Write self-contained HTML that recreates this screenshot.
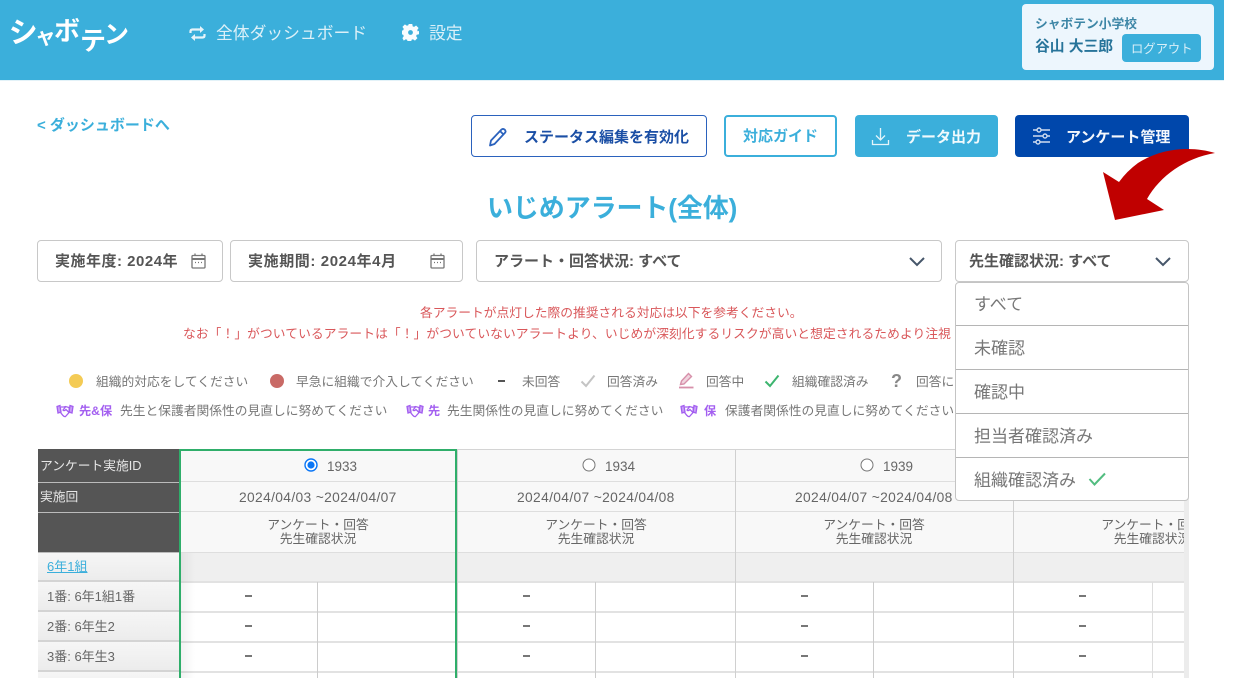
<!DOCTYPE html>
<html lang="ja">
<head>
<meta charset="utf-8">
<title>いじめアラート(全体)</title>
<style>
*{box-sizing:border-box}
html,body{margin:0;padding:0;background:#fff}
body{width:1250px;height:678px;position:relative;overflow:hidden;font-family:"Liberation Sans","Noto Sans CJK JP",sans-serif;color:#666;filter:blur(.35px)}
.a{position:absolute;white-space:nowrap}
.t{position:absolute;white-space:nowrap;line-height:1}
svg{position:absolute;display:block}
.hdr{position:absolute;left:0;top:0;width:1224px;height:81px;background:#3bafdb;border-bottom:1px solid #e3f2f8}
.logo{position:absolute;font-size:29px;font-weight:700;color:#fff;line-height:1}
.nav{position:absolute;font-size:16.8px;line-height:1;color:#dcf0f8;white-space:nowrap}
.btn{position:absolute;top:115px;height:42px;border-radius:4px}
.bt{position:absolute;top:130px;font-size:15px;font-weight:700;line-height:1;white-space:nowrap}
.f{position:absolute;top:240px;height:42px;background:#fff;border:1px solid #c8c8c8;border-radius:4px}
.ft{position:absolute;top:254px;font-size:15px;font-weight:700;color:#555;line-height:1;white-space:nowrap}
.red{font-size:12.75px;color:#d9575a}
.lg{font-size:12.75px;color:#777}
.pp{font-size:12.75px;font-weight:700;color:#a35ff0}
.c{position:absolute;border-bottom:1px solid #dedede;background:#f8f8f8}
.d{position:absolute;background:#555;border-bottom:1px solid #bbb;color:#e6e6e6;font-size:12.75px;line-height:1;white-space:nowrap}
.l{position:absolute;left:0;width:141px;background:linear-gradient(#f6f6f6,#ececec);border-bottom:2px solid #d4d4d4;font-size:13px;color:#666;white-space:nowrap;line-height:1}
.ct{position:absolute;text-align:center;color:#666;font-size:12.75px;line-height:14px;white-space:nowrap}
.dash{position:absolute;width:7px;height:2px;background:#777}
.dd{position:absolute;left:956px;width:232px;font-size:17px;color:#777;padding-left:18px;border-bottom:1px solid #b5b5b5;line-height:1;white-space:nowrap}
.n{position:absolute;font-size:13.5px;color:#666;line-height:1;white-space:nowrap}
.dt{position:absolute;font-size:13.8px;letter-spacing:.35px;color:#666;line-height:1;white-space:nowrap}
</style>
</head>
<body>

<!-- header -->
<div class="hdr"></div>
<span class="logo" style="left:9px;top:19px;transform:rotate(-4deg)">シ</span>
<span class="logo" style="left:35px;top:27px;font-size:21px;transform:rotate(-6deg)">ャ</span>
<span class="logo" style="left:54px;top:18px;font-size:26px">ボ</span>
<span class="logo" style="left:80px;top:28px;font-size:26px">テ</span>
<span class="logo" style="left:104px;top:23px;font-size:25px">ン</span>

<svg style="left:189px;top:25px" width="17" height="17" viewBox="0 0 17 17" fill="none" stroke="#e6f4fa" stroke-width="2.2"><path d="M1.500 8V6.500Q1.500 4.500 3.500 4.500H12"/><path d="M15.500 9V10.500Q15.500 12.500 13.500 12.500H5"/><path d="M11 1L15 4.500L11 8Z" fill="#e6f4fa" stroke="none"/><path d="M6 9L2 12.500L6 16Z" fill="#e6f4fa" stroke="none"/></svg>
<span class="nav" style="left:216px;top:26px">全体ダッシュボード</span>
<svg style="left:402px;top:24px" width="17" height="17" viewBox="0 0 24 24"><path fill="#f8fcfe" fill-rule="evenodd" d="M9.500 0h5l.6 3.300 2 .8 2.800-1.900 3.500 3.500-1.900 2.800.8 2L24 9.500v5l-3.300.6-.8 2 1.900 2.800-3.500 3.500-2.800-1.900-2 .8-.6 3.300h-5l-.6-3.300-2-.8-2.800 1.900L.6 19.900l1.900-2.800-.8-2L-1 14.500v-5l2.700-.6.8-2L.6 4.100 4.100.6l2.800 1.900 2-.8zM12 8.600a3.400 3.400 0 1 0 0 6.800 3.400 3.400 0 0 0 0-6.800z"/></svg>
<span class="nav" style="left:429px;top:26px">設定</span>

<div class="a" style="left:1022px;top:4px;width:192px;height:66px;background:#edf6fd;border-radius:4px"></div>
<span class="t" style="left:1035px;top:18px;font-size:12.75px;font-weight:700;color:#3d86a6">シャボテン小学校</span>
<span class="t" style="left:1035px;top:40px;font-size:14.8px;font-weight:700;color:#27749a">谷山 大三郎</span>
<div class="a" style="left:1122px;top:34px;width:79px;height:28px;background:#3bafdb;border-radius:4px"></div>
<span class="t" style="left:1131px;top:43px;font-size:12.3px;color:#d8eff8">ログアウト</span>

<!-- back link -->
<span class="t" style="left:37px;top:118px;font-size:15px;font-weight:700;color:#3bafdb">&lt; ダッシュボードへ</span>

<!-- action buttons -->
<div class="btn" style="left:471px;width:236px;background:#fff;border:1px solid #2b62bd"></div>
<svg style="left:488px;top:127px" width="20" height="20" viewBox="0 0 20 20" fill="none" stroke="#2b62bd" stroke-width="1.800" stroke-linejoin="round"><path d="M2 18.500L3 13.500L13.500 2.500Q15 1.200 16.800 2.700Q18.200 4.300 17 5.800L6.500 17Z"/><path d="M12 4L15.500 7.500"/></svg>
<span class="bt" style="left:524px;color:#1b4fa5">ステータス編集を有効化</span>

<div class="btn" style="left:724px;width:113px;background:#fff;border:2px solid #3bafdb"></div>
<span class="bt" style="left:743px;top:129px;color:#3bafdb">対応ガイド</span>

<div class="btn" style="left:855px;width:143px;background:#3bafdb"></div>
<svg style="left:871px;top:127px" width="19" height="19" viewBox="0 0 19 19" fill="none" stroke="#e4f4fa" stroke-width="1.300"><path d="M9.500 1V12.500"/><path d="M5 8.500L9.500 13L14 8.500"/><path d="M1.500 13V17.500H17.500V13"/></svg>
<span class="bt" style="left:906px;color:#f1fafd">データ出力</span>

<div class="btn" style="left:1015px;width:174px;background:#0047ab"></div>
<svg style="left:1032px;top:127px" width="19" height="18" viewBox="0 0 19 18" fill="none" stroke="#cfdcf0" stroke-width="1.400"><path d="M1 3H5M9 3H18M1 9H11M15 9H18M1 15H4M8 15H18"/><circle cx="7" cy="3" r="2"/><circle cx="13" cy="9" r="2"/><circle cx="6" cy="15" r="2"/></svg>
<span class="bt" style="left:1066px;color:#f4f7fc">アンケート管理</span>

<!-- title -->
<span class="t" style="left:487px;top:195px;font-size:26px;font-weight:700;color:#3bafdb;letter-spacing:-.1px">いじめアラート(全体)</span>

<!-- filters -->
<div class="f" style="left:37px;width:186px"></div>
<span class="ft" style="left:55px;letter-spacing:.5px">実施年度: 2024年</span>
<svg style="left:191px;top:253px" width="15" height="16" viewBox="0 0 15 16" fill="none" stroke="#777" stroke-width="1.300"><rect x="1" y="2.500" width="13" height="12.500" rx="1"/><path d="M1 6H14" stroke-width="2"/><path d="M4 .5V3M11 .5V3"/><path d="M4 9.500H5M7 9.500H8M10 9.500H11"/></svg>
<div class="f" style="left:230px;width:233px"></div>
<span class="ft" style="left:248px;letter-spacing:.6px">実施期間: 2024年4月</span>
<svg style="left:430px;top:253px" width="15" height="16" viewBox="0 0 15 16" fill="none" stroke="#777" stroke-width="1.300"><rect x="1" y="2.500" width="13" height="12.500" rx="1"/><path d="M1 6H14" stroke-width="2"/><path d="M4 .5V3M11 .5V3"/><path d="M4 9.500H5M7 9.500H8M10 9.500H11"/></svg>
<div class="f" style="left:476px;width:466px"></div>
<span class="ft" style="left:494px">アラート・回答状況: すべて</span>
<svg style="left:908px;top:256px" width="18" height="11" viewBox="0 0 18 11" fill="none" stroke="#46566a" stroke-width="2"><path d="M2 2L9 9L16 2"/></svg>
<div class="f" style="left:955px;width:234px"></div>
<span class="ft" style="left:969px">先生確認状況: すべて</span>
<svg style="left:1154px;top:256px" width="18" height="11" viewBox="0 0 18 11" fill="none" stroke="#46566a" stroke-width="2"><path d="M2 2L9 9L16 2"/></svg>

<!-- notice -->
<span class="t red" style="left:420px;top:307px">各アラートが点灯した際の推奨される対応は以下を参考ください。</span>
<span class="t red" style="left:183px;top:328px;letter-spacing:.08px">なお「！」がついているアラートは「！」がついていないアラートより、いじめが深刻化するリスクが高いと想定されるためより注視</span>

<!-- legend row 1 -->
<div class="a" style="left:69px;top:374px;width:14px;height:14px;border-radius:50%;background:#f4cb55"></div>
<span class="t lg" style="left:96px;top:376px">組織的対応をしてください</span>
<div class="a" style="left:270px;top:374px;width:14px;height:14px;border-radius:50%;background:#c96a66"></div>
<span class="t lg" style="left:296px;top:376px">早急に組織で介入してください</span>
<div class="dash" style="left:498px;top:380px;height:2px;background:#555"></div>
<span class="t lg" style="left:522px;top:376px">未回答</span>
<svg style="left:580px;top:374px" width="16" height="14" viewBox="0 0 16 14" fill="none" stroke="#c4c4c4" stroke-width="2"><path d="M1.500 7.500L6 12L14.500 1.500"/></svg>
<span class="t lg" style="left:607px;top:376px">回答済み</span>
<svg style="left:679px;top:372px" width="15" height="17" viewBox="0 0 15 17" fill="none" stroke="#d790aa" stroke-width="1.400"><path d="M1.500 12.500L2.500 9L9.500 1.500L12.500 4.500L5 12Z" fill="#f0d4de"/><path d="M0 15.500H14.500" stroke-width="1.800"/></svg>
<span class="t lg" style="left:706px;top:376px">回答中</span>
<svg style="left:764px;top:374px" width="16" height="14" viewBox="0 0 16 14" fill="none" stroke="#3db56f" stroke-width="2"><path d="M1.500 7.500L6 12L14.500 1.500"/></svg>
<span class="t lg" style="left:792px;top:376px">組織確認済み</span>
<span class="t" style="left:891px;top:372px;font-size:18px;font-weight:700;color:#888">?</span>
<span class="t lg" style="left:916px;top:376px">回答に</span>

<!-- legend row 2 -->
<svg style="left:56px;top:404px" width="18" height="14" viewBox="0 0 18 14" fill="none" stroke="#a35ff0" stroke-width="1.300"><path d="M1 2.500L4 1.500L5 8L2 9Z" fill="#c9a0f7"/><path d="M17 2.500L14 1.500L13 8L16 9Z" fill="#c9a0f7"/><path d="M5 3H8L9.500 2.500L13 3.500L13.500 8L9.500 12.500Q8.500 13 7 11.500L4.500 8.500"/><path d="M9.500 3L7 6Q8 7.500 10 5.500L13 8.500"/></svg>
<span class="t pp" style="left:79px;top:405px;font-size:12.2px">先&amp;保</span>
<span class="t lg" style="left:120px;top:405px">先生と保護者関係性の見直しに努めてください</span>
<svg style="left:406px;top:404px" width="18" height="14" viewBox="0 0 18 14" fill="none" stroke="#a35ff0" stroke-width="1.300"><path d="M1 2.500L4 1.500L5 8L2 9Z" fill="#c9a0f7"/><path d="M17 2.500L14 1.500L13 8L16 9Z" fill="#c9a0f7"/><path d="M5 3H8L9.500 2.500L13 3.500L13.500 8L9.500 12.500Q8.500 13 7 11.500L4.500 8.500"/><path d="M9.500 3L7 6Q8 7.500 10 5.500L13 8.500"/></svg>
<span class="t pp" style="left:428px;top:405px;font-size:12.2px">先</span>
<span class="t lg" style="left:447px;top:405px">先生関係性の見直しに努めてください</span>
<svg style="left:680px;top:404px" width="18" height="14" viewBox="0 0 18 14" fill="none" stroke="#a35ff0" stroke-width="1.300"><path d="M1 2.500L4 1.500L5 8L2 9Z" fill="#c9a0f7"/><path d="M17 2.500L14 1.500L13 8L16 9Z" fill="#c9a0f7"/><path d="M5 3H8L9.500 2.500L13 3.500L13.500 8L9.500 12.500Q8.500 13 7 11.500L4.500 8.500"/><path d="M9.500 3L7 6Q8 7.500 10 5.500L13 8.500"/></svg>
<span class="t pp" style="left:704px;top:405px;font-size:12.2px">保</span>
<span class="t lg" style="left:725px;top:405px">保護者関係性の見直しに努めてください</span>

<!-- table -->
<div class="a" style="left:38px;top:449px;width:1146px;height:229px;overflow:hidden;background:#fff">
<div class="a" style="left:0;top:0;width:1146px;height:1px;background:#d4d4d4"></div>
<div class="a" style="left:0;top:1px;width:1146px;height:228px">
<div class="c" style="left:141px;top:0;width:1010px;height:32px"></div>
<div class="c" style="left:141px;top:32px;width:1010px;height:30px"></div>
<div class="c" style="left:141px;top:62px;width:1010px;height:41px"></div>
<div class="c" style="left:141px;top:103px;width:1010px;height:29px;background:#efefef"></div>

<!-- body row separators -->
<div class="a" style="left:141px;top:131px;width:1010px;height:2px;background:#e2e2e2"></div>
<div class="a" style="left:141px;top:161px;width:1010px;height:2px;background:#e2e2e2"></div>
<div class="a" style="left:141px;top:191px;width:1010px;height:2px;background:#e2e2e2"></div>
<div class="a" style="left:141px;top:221px;width:1010px;height:2px;background:#e2e2e2"></div>
<!-- column separators -->
<div class="a" style="left:279px;top:132px;width:1px;height:100px;background:#ccc"></div>
<div class="a" style="left:419px;top:0;width:1px;height:233px;background:#d0d0d0"></div>
<div class="a" style="left:557px;top:132px;width:1px;height:100px;background:#ccc"></div>
<div class="a" style="left:697px;top:0;width:1px;height:233px;background:#d0d0d0"></div>
<div class="a" style="left:835px;top:132px;width:1px;height:100px;background:#ccc"></div>
<div class="a" style="left:975px;top:0;width:1px;height:233px;background:#d0d0d0"></div>
<div class="a" style="left:1114px;top:132px;width:1px;height:100px;background:#ddd"></div>

<!-- shadow beside sticky column -->
<div class="a" style="left:143px;top:103px;width:14px;height:126px;background:linear-gradient(90deg,rgba(0,0,0,.05),rgba(0,0,0,0))"></div>

<!-- dark header cells -->
<div class="d" style="left:0;top:-1px;width:141px;height:34px;padding:11px 0 0 2px">アンケート実施ID</div>
<div class="d" style="left:0;top:33px;width:141px;height:30px;padding:8px 0 0 2px">実施回</div>
<div class="d" style="left:0;top:63px;width:141px;height:40px"></div>

<!-- left column -->
<div class="l" style="top:103px;height:29px;padding:7px 0 0 9px;color:#3bafdb;text-decoration:underline">6年1組</div>
<div class="l" style="top:132px;height:30px;padding:8px 0 0 9px">1番: 6年1組1番</div>
<div class="l" style="top:162px;height:30px;padding:8px 0 0 9px">2番: 6年生2</div>
<div class="l" style="top:192px;height:30px;padding:8px 0 0 9px">3番: 6年生3</div>
<div class="l" style="top:222px;height:30px"></div>

<!-- column 1 -->
<svg style="left:266px;top:8px" width="14" height="14" viewBox="0 0 14 14"><circle cx="7" cy="7" r="6" fill="#fff" stroke="#0a76f6" stroke-width="1.400"/><circle cx="7" cy="7" r="3.600" fill="#0a76f6"/></svg>
<span class="n" style="left:289px;top:10px">1933</span>
<span class="dt" style="left:201px;top:41px">2024/04/03 ~2024/04/07</span>
<div class="ct" style="left:141px;width:278px;top:68px">アンケート・回答<br>先生確認状況</div>
<div class="dash" style="left:207px;top:145px"></div>
<div class="dash" style="left:207px;top:175px"></div>
<div class="dash" style="left:207px;top:205px"></div>

<!-- column 2 -->
<svg style="left:544px;top:8px" width="14" height="14" viewBox="0 0 14 14"><circle cx="7" cy="7" r="6" fill="#fff" stroke="#777" stroke-width="1"/></svg>
<span class="n" style="left:567px;top:10px">1934</span>
<span class="dt" style="left:479px;top:41px">2024/04/07 ~2024/04/08</span>
<div class="ct" style="left:419px;width:278px;top:68px">アンケート・回答<br>先生確認状況</div>
<div class="dash" style="left:485px;top:145px"></div>
<div class="dash" style="left:485px;top:175px"></div>
<div class="dash" style="left:485px;top:205px"></div>

<!-- column 3 -->
<svg style="left:822px;top:8px" width="14" height="14" viewBox="0 0 14 14"><circle cx="7" cy="7" r="6" fill="#fff" stroke="#777" stroke-width="1"/></svg>
<span class="n" style="left:845px;top:10px">1939</span>
<span class="dt" style="left:757px;top:41px">2024/04/07 ~2024/04/08</span>
<div class="ct" style="left:697px;width:278px;top:68px">アンケート・回答<br>先生確認状況</div>
<div class="dash" style="left:763px;top:145px"></div>
<div class="dash" style="left:763px;top:175px"></div>
<div class="dash" style="left:763px;top:205px"></div>

<!-- column 4 -->
<div class="ct" style="left:975px;width:278px;top:68px">アンケート・回答<br>先生確認状況</div>
<div class="dash" style="left:1041px;top:145px"></div>
<div class="dash" style="left:1041px;top:175px"></div>
<div class="dash" style="left:1041px;top:205px"></div>

<!-- highlighted column -->
<div class="a" style="left:141px;top:-1px;width:278px;height:240px;border:2px solid #2fae6a;border-bottom:0"></div>
</div>
</div>
<div class="a" style="left:1184px;top:449px;width:5px;height:229px;background:#ececec"></div>

<!-- dropdown -->
<div class="a" style="left:955px;top:282px;width:234px;height:219px;background:#fff;border:1px solid #c4c4c4;border-radius:4px"></div>
<div class="dd" style="top:283px;height:43px;padding-top:13px">すべて</div>
<div class="dd" style="top:326px;height:44px;padding-top:14px">未確認</div>
<div class="dd" style="top:370px;height:44px;padding-top:14px">確認中</div>
<div class="dd" style="top:414px;height:44px;padding-top:14px">担当者確認済み</div>
<div class="dd" style="top:458px;height:42px;padding-top:14px;border-bottom:0">組織確認済み</div>
<svg style="left:1088px;top:472px" width="19" height="14" viewBox="0 0 19 14" fill="none" stroke="#52bd80" stroke-width="2"><path d="M1.500 7L6.500 12.500L17 1.500"/></svg>

<!-- red arrow -->
<svg style="left:0;top:0" width="1250" height="678" viewBox="0 0 1250 678"><path fill="#c00000" d="M1215 153C1195 147 1165 146 1138 163Q1127 171 1119 182L1103 172L1115 220L1164 210L1147 199C1160 176 1185 158 1215 153Z"/></svg>

</body>
</html>
